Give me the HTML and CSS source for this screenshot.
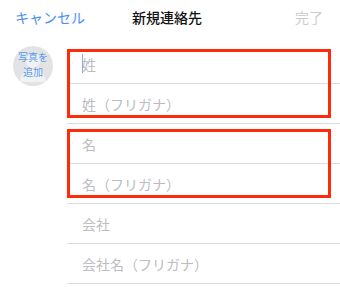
FILE: index.html
```html
<!DOCTYPE html>
<html lang="ja">
<head>
    <meta charset="UTF-8">
    <meta name="viewport" content="width=device-width, initial-scale=1.0">
    <title>新規連絡先</title>
    <link rel="stylesheet" href="styles.css">
</head>
<body>
    <header class="nav">
        <a href="#" class="nav-cancel">キャンセル</a>
        <h1 class="nav-title">新規連絡先</h1>
        <span class="nav-done">完了</span>
    </header>
    <main class="form">
        <div class="photo">
            <div class="photo-circle">
                <svg class="photo-person" viewBox="0 0 40 40" width="40" height="40">
                    <circle cx="20" cy="15" r="7" fill="#fff"/>
                    <path d="M7 36 C8 27 13 23 20 23 C27 23 32 27 33 36 Z" fill="#fff"/>
                </svg>
                <span class="photo-label">写真を<br>追加</span>
            </div>
        </div>
        <div class="fields">
            <div class="group marked">
                <div class="field"><span class="caret"></span>姓</div>
                <div class="field">姓（フリガナ）</div>
            </div>
            <div class="group marked">
                <div class="field">名</div>
                <div class="field">名（フリガナ）</div>
            </div>
            <div class="group">
                <div class="field">会社</div>
                <div class="field">会社名（フリガナ）</div>
            </div>
        </div>
    </main>
</body>
</html>
```

FILE: styles.css
```css
body {
    margin: 0;
    padding: 0;
    background-color: #fff;
    font-family: "Noto Sans CJK JP", "Noto Sans", sans-serif;
    color: #111;
    overflow: hidden;
}
.nav {
    height: 34px;
    display: grid;
    grid-template-columns: 1fr auto 1fr;
    align-items: center;
    padding: 0 17px 0 15px;
    font-size: 14px;
}
.nav-cancel {
    color: #4a8ef2;
    text-decoration: none;
}
.nav-title {
    margin: 0;
    font-size: 14px;
    font-weight: 500;
    color: #111;
    position: relative;
    left: -2px;
}
.nav-done {
    justify-self: end;
    color: #cdcdd0;
}
.form {
    display: flex;
    margin-top: 10px;
}
.photo {
    width: 67px;
    flex-shrink: 0;
}
.photo-circle {
    width: 40px;
    height: 40px;
    margin: 2px 0 0 13px;
    border-radius: 50%;
    background-color: #e3e3e6;
    position: relative;
    display: flex;
    align-items: center;
    justify-content: center;
    overflow: hidden;
}
.photo-person {
    position: absolute;
    top: 0;
    left: 0;
    opacity: 0.55;
}
.photo-label {
    position: relative;
    font-size: 10px;
    line-height: 15px;
    text-align: center;
    color: #5a9bf0;
    margin-top: -4px;
}
.fields {
    flex-grow: 1;
}
.group {
    position: relative;
}
.group.marked::after {
    content: "";
    position: absolute;
    top: 5px;
    left: 0;
    right: 9px;
    bottom: 6px;
    border: 3.5px solid #ff2a0c;
}
.field {
    height: 40px;
    box-sizing: border-box;
    border-bottom: 1px solid #dedee0;
    display: flex;
    align-items: center;
    padding-left: 15px;
    font-size: 14px;
    color: #bcbcc1;
    position: relative;
}
.caret {
    position: absolute;
    left: 15px;
    top: 10px;
    width: 1px;
    height: 19px;
    background-color: #8aa6f5;
}
```
